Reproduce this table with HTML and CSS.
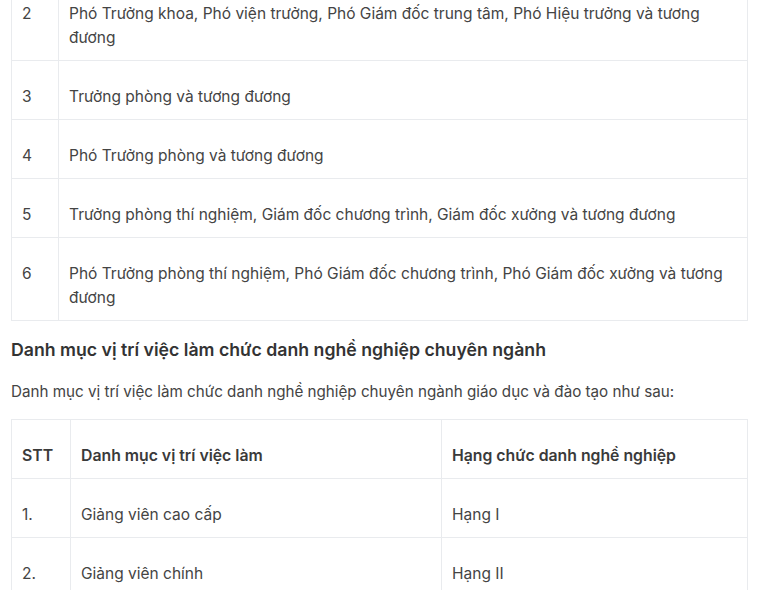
FILE: index.html
```html
<!DOCTYPE html>
<html lang="vi">
<head>
    <meta charset="UTF-8">
    <meta name="viewport" content="width=device-width, initial-scale=1.0">
    <title>Danh mục vị trí việc làm</title>
    <link rel="stylesheet" href="styles.css">
</head>
<body>
    <div class="article">
        <table class="data-table first-table">
            <colgroup>
                <col class="col-num">
                <col>
            </colgroup>
            <tr>
                <td>2</td>
                <td>Phó Trưởng khoa, Phó viện trưởng, Phó Giám đốc trung tâm, Phó Hiệu trưởng và tương đương</td>
            </tr>
            <tr>
                <td>3</td>
                <td>Trưởng phòng và tương đương</td>
            </tr>
            <tr>
                <td>4</td>
                <td>Phó Trưởng phòng và tương đương</td>
            </tr>
            <tr>
                <td>5</td>
                <td>Trưởng phòng thí nghiệm, Giám đốc chương trình, Giám đốc xưởng và tương đương</td>
            </tr>
            <tr>
                <td>6</td>
                <td>Phó Trưởng phòng thí nghiệm, Phó Giám đốc chương trình, Phó Giám đốc xưởng và tương đương</td>
            </tr>
        </table>

        <h3>Danh mục vị trí việc làm chức danh nghề nghiệp chuyên ngành</h3>
        <p>Danh mục vị trí việc làm chức danh nghề nghiệp chuyên ngành giáo dục và đào tạo như sau:</p>

        <table class="data-table">
            <colgroup>
                <col class="col-stt">
                <col class="col-name">
                <col>
            </colgroup>
            <tr>
                <th>STT</th>
                <th>Danh mục vị trí việc làm</th>
                <th>Hạng chức danh nghề nghiệp</th>
            </tr>
            <tr>
                <td>1.</td>
                <td>Giảng viên cao cấp</td>
                <td>Hạng I</td>
            </tr>
            <tr>
                <td>2.</td>
                <td>Giảng viên chính</td>
                <td>Hạng II</td>
            </tr>
        </table>
    </div>
</body>
</html>
```

FILE: styles.css
```css
body {
    margin: 0;
    padding: 0;
    background-color: #ffffff;
    font-family: 'Inter', 'Noto Sans', sans-serif;
    color: #444444;
    font-size: 15.5px;
    line-height: 24px;
}

.article {
    width: 737px;
    margin-left: 11px;
}

/* Tables */
.data-table {
    width: 100%;
    border-collapse: collapse;
}

.first-table {
    margin-top: -23px;
}

.data-table td,
.data-table th {
    border: 1px solid #e9ebee;
    padding: 24px 10px 10px;
    text-align: left;
    vertical-align: top;
}

.data-table th {
    font-weight: 600;
    font-size: 15.8px;
    color: #3a3a3a;
}

.col-num {
    width: 47px;
}

.col-stt {
    width: 59px;
}

.col-name {
    width: 371px;
}

h3 {
    font-size: 17.7px;
    line-height: 24px;
    font-weight: 600;
    color: #333333;
    margin: 17px 0 18px;
}

p {
    font-size: 15.2px;
    margin: 0 0 15px;
}
```
